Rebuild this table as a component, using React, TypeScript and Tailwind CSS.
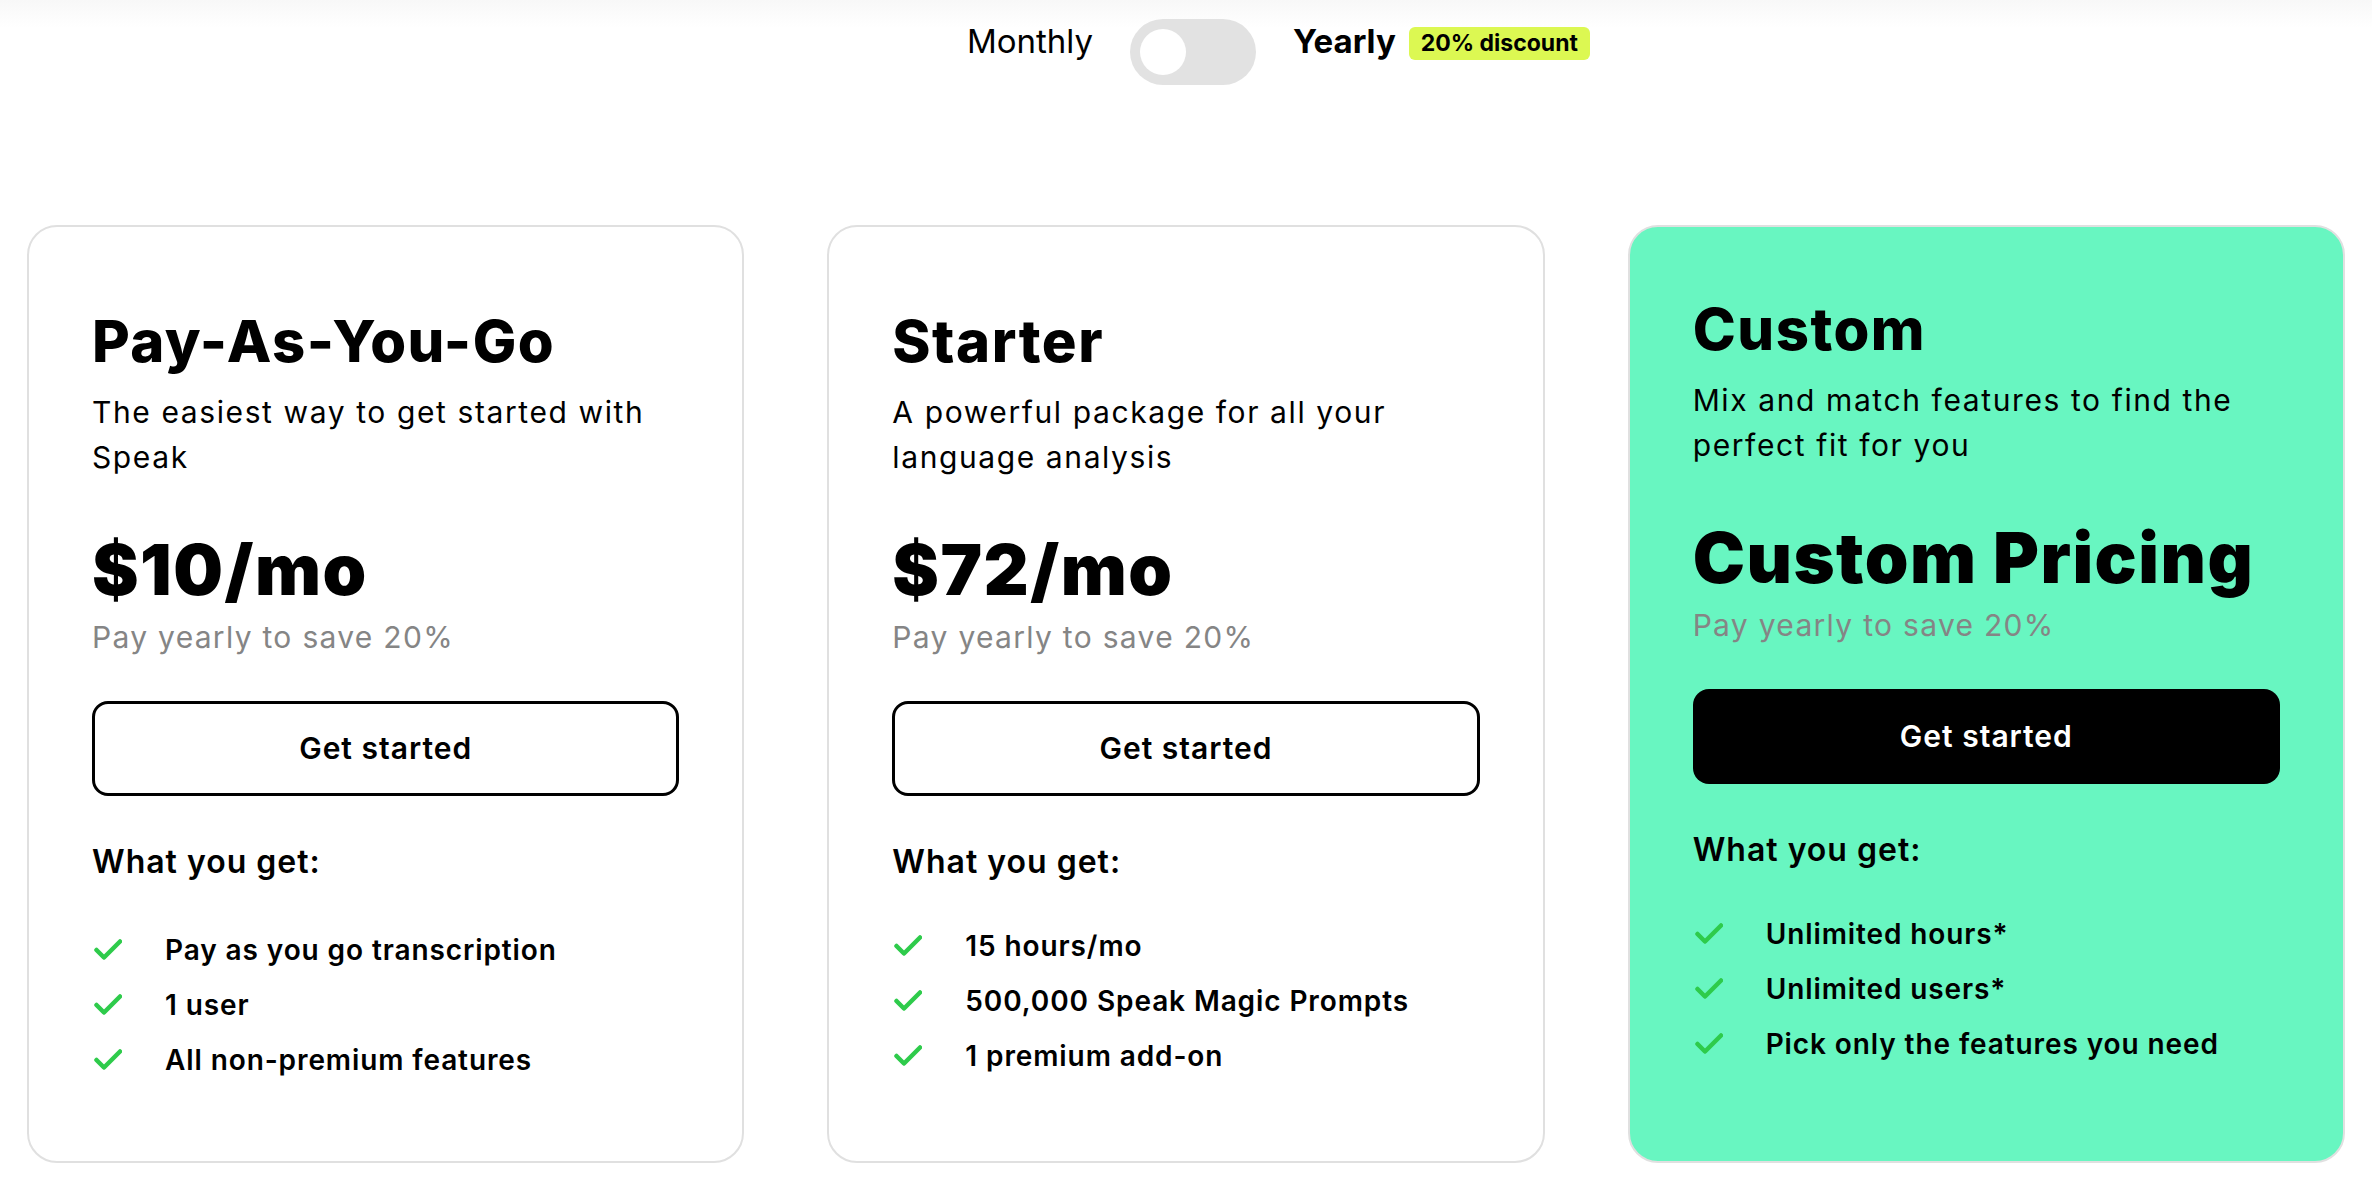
import React from 'react';

type Plan = {
  name: string;
  blurb: string;
  price: string;
  features: string[];
  featured?: boolean;
};

const plans: Plan[] = [
  {
    name: 'Pay-As-You-Go',
    blurb: 'The easiest way to get started with Speak',
    price: '$10/mo',
    features: ['Pay as you go transcription', '1 user', 'All non-premium features'],
  },
  {
    name: 'Starter',
    blurb: 'A powerful package for all your language analysis',
    price: '$72/mo',
    features: ['15 hours/mo', '500,000 Speak Magic Prompts', '1 premium add-on'],
  },
  {
    name: 'Custom',
    blurb: 'Mix and match features to find the perfect fit for you',
    price: 'Custom Pricing',
    features: ['Unlimited hours*', 'Unlimited users*', 'Pick only the features you need'],
    featured: true,
  },
];

function Check() {
  return (
    <svg width="28" height="22" viewBox="0 0 28 22" fill="none" className="shrink-0">
      <polyline
        points="2.5,11 10,18.5 26,2.5"
        stroke="#2ecb4b"
        strokeWidth="4.5"
        strokeLinecap="round"
        strokeLinejoin="round"
      />
    </svg>
  );
}

function PlanCard({ plan, first }: { plan: Plan; first: boolean }) {
  return (
    <div
      className={
        plan.featured
          ? 'h-[938px] rounded-[30px] border-2 border-[#e0e0e0] bg-[#68f6c1] px-[63px] pt-[69px]'
          : 'h-[938px] rounded-[30px] border-2 border-[#e0e0e0] bg-white px-[63px] pt-[81px]'
      }
    >
      <h2 className="text-[58px] font-extrabold leading-[1.16] tracking-[1.5px] text-black">{plan.name}</h2>
      <p className="mt-[15px] max-w-[580px] text-[30px] leading-[45px] tracking-[1.6px] text-black">{plan.blurb}</p>
      <div className="mt-[50px] text-[70px] font-black leading-[1.13] tracking-[1.5px] text-black">{plan.price}</div>
      <p className="mt-[6px] text-[30px] leading-[45px] tracking-[1.3px] text-[#858585]">Pay yearly to save 20%</p>
      {plan.featured ? (
        <button className="mt-[41px] flex h-[95px] w-full items-center justify-center rounded-[16px] bg-black text-[30px] font-semibold tracking-[1px] text-white">
          Get started
        </button>
      ) : (
        <button className="mt-[41px] flex h-[95px] w-full items-center justify-center rounded-[16px] border-[3px] border-black bg-white text-[30px] font-semibold tracking-[1px] text-black">
          Get started
        </button>
      )}
      <h3 className="mt-[43px] text-[32px] font-semibold leading-[45px] tracking-[1px] text-black">What you get:</h3>
      <ul className={first ? 'mt-[38px] flex flex-col' : 'mt-[34px] flex flex-col'}>
        {plan.features.map((f) => (
          <li key={f} className="flex h-[55px] items-center gap-[43px] pl-[2px]">
            <Check />
            <span className="text-[28px] font-semibold tracking-[0.9px] text-black">{f}</span>
          </li>
        ))}
      </ul>
    </div>
  );
}

export default function App() {
  return (
    <div
      className="min-h-screen bg-[linear-gradient(to_bottom,#f8f8f8_0px,#ffffff_28px)] pb-[15px]"
      style={{ fontFamily: 'Inter, "Noto Sans", sans-serif' }}
    >
      {/* billing toggle */}
      <div className="grid grid-cols-[1fr_126px_1fr] gap-[37px] pl-[14px] pt-[16px]">
        <div className="flex justify-end">
          <span className="text-[33px] leading-[50px] text-black">Monthly</span>
        </div>
        <div className="mt-[3px] flex h-[66px] w-[126px] items-center rounded-full bg-[#e2e2e2] pl-[10px]">
          <div className="h-[46px] w-[46px] rounded-full bg-white" />
        </div>
        <div className="flex items-start gap-[13px]">
          <span className="text-[33px] font-bold leading-[50px] text-black">Yearly</span>
          <span className="mt-[11px] rounded-[6px] bg-[#dcf852] px-[12px] text-[23px] font-bold leading-[33px] text-black">
            20% discount
          </span>
        </div>
      </div>

      {/* plans */}
      <div className="mt-[140px] grid grid-cols-3 gap-[83px] px-[27px]">
        {plans.map((p, i) => (
          <PlanCard key={p.name} plan={p} first={i === 0} />
        ))}
      </div>
    </div>
  );
}
